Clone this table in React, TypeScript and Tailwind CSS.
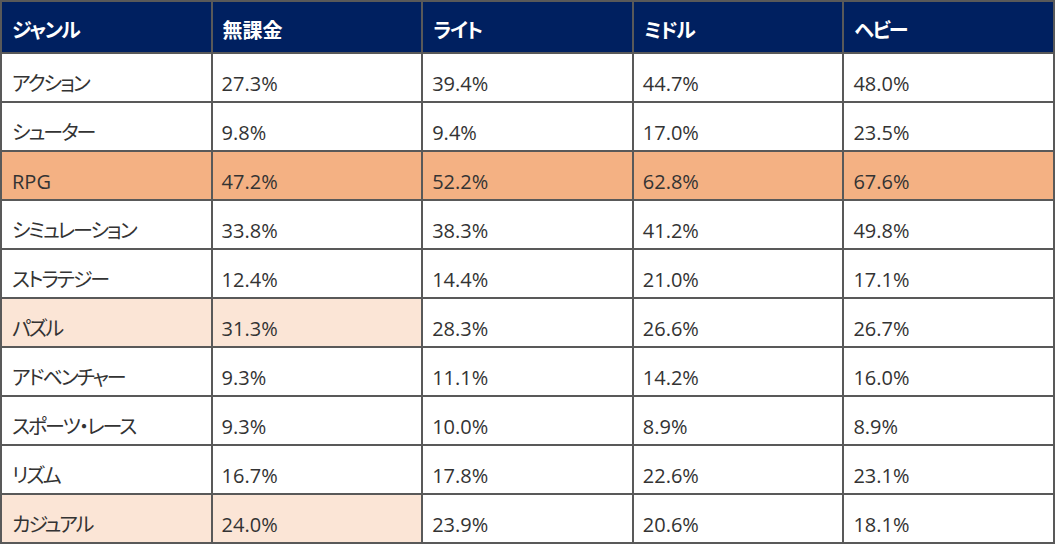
import React from "react";

type Row = { genre: string; values: string[]; hl?: "full" | "first" };

const headers = ["ジャンル", "無課金", "ライト", "ミドル", "ヘビー"];

const rows: Row[] = [
  { genre: "アクション", values: ["27.3%", "39.4%", "44.7%", "48.0%"] },
  { genre: "シューター", values: ["9.8%", "9.4%", "17.0%", "23.5%"] },
  { genre: "RPG", values: ["47.2%", "52.2%", "62.8%", "67.6%"], hl: "full" },
  { genre: "シミュレーション", values: ["33.8%", "38.3%", "41.2%", "49.8%"] },
  { genre: "ストラテジー", values: ["12.4%", "14.4%", "21.0%", "17.1%"] },
  { genre: "パズル", values: ["31.3%", "28.3%", "26.6%", "26.7%"], hl: "first" },
  { genre: "アドベンチャー", values: ["9.3%", "11.1%", "14.2%", "16.0%"] },
  { genre: "スポーツ・レース", values: ["9.3%", "10.0%", "8.9%", "8.9%"] },
  { genre: "リズム", values: ["16.7%", "17.8%", "22.6%", "23.1%"] },
  { genre: "カジュアル", values: ["24.0%", "23.9%", "20.6%", "18.1%"], hl: "first" },
];

function cellBg(hl: Row["hl"], col: number) {
  if (hl === "full") return "bg-[#f4b183]";
  if (hl === "first" && col < 2) return "bg-[#fbe5d6]";
  return "bg-white";
}

export default function App() {
  return (
    <div className="w-[1057px] h-[549px] bg-white font-['Open_Sans','Noto_Sans_CJK_JP',sans-serif] [font-feature-settings:'palt']">
      <div className="w-[1055px] bg-[#595959] p-[2px] grid grid-cols-5 gap-[2px] grid-rows-[50px_repeat(10,47px)]">
        {headers.map((h, i) => (
          <div
            key={h}
            className={`bg-[#002060] text-white font-bold text-[20px] leading-none flex items-end pb-[11px] pl-[10px] ${
              i === 1 ? "" : "tracking-[-1.5px]"
            }`}
          >
            {h}
          </div>
        ))}
        {rows.map((r) => (
          <React.Fragment key={r.genre}>
            <div
              className={`${cellBg(r.hl, 0)} text-[#333333] text-[20px] ${
                r.genre === "RPG" ? "" : "tracking-[-2px]"
              } leading-none flex items-end pb-[7px] pl-[10px]`}
            >
              {r.genre}
            </div>
            {r.values.map((v, i) => (
              <div
                key={i}
                className={`${cellBg(r.hl, i + 1)} text-[#333333] text-[20px] leading-none flex items-end pb-[7px] pl-[9px]`}
              >
                {v}
              </div>
            ))}
          </React.Fragment>
        ))}
      </div>
    </div>
  );
}
